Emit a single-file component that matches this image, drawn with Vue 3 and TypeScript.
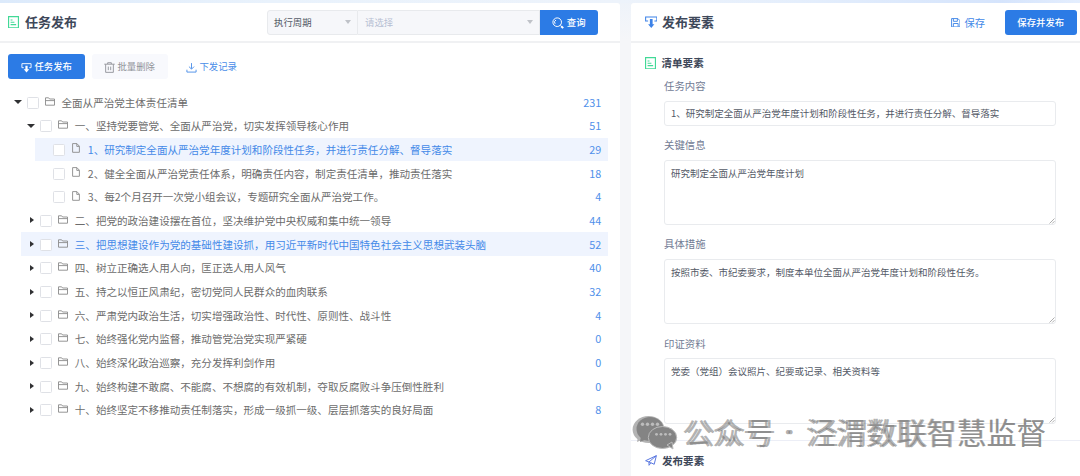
<script setup lang="ts">
interface TreeRow {
  label: string
  count: number
  level: 0 | 1 | 2
  open?: boolean
  active?: boolean
}

const rows: TreeRow[] = [
  { label: '全面从严治党主体责任清单', count: 231, level: 0, open: true },
  { label: '一、坚持党要管党、全面从严治党，切实发挥领导核心作用', count: 51, level: 1, open: true },
  { label: '1、研究制定全面从严治党年度计划和阶段性任务，并进行责任分解、督导落实', count: 29, level: 2, active: true },
  { label: '2、健全全面从严治党责任体系，明确责任内容，制定责任清单，推动责任落实', count: 18, level: 2 },
  { label: '3、每2个月召开一次党小组会议，专题研究全面从严治党工作。', count: 4, level: 2 },
  { label: '二、把党的政治建设摆在首位，坚决维护党中央权威和集中统一领导', count: 44, level: 1 },
  { label: '三、把思想建设作为党的基础性建设抓，用习近平新时代中国特色社会主义思想武装头脑', count: 52, level: 1, active: true },
  { label: '四、树立正确选人用人向，匡正选人用人风气', count: 40, level: 1 },
  { label: '五、持之以恒正风肃纪，密切党同人民群众的血肉联系', count: 32, level: 1 },
  { label: '六、严肃党内政治生活，切实增强政治性、时代性、原则性、战斗性', count: 4, level: 1 },
  { label: '七、始终强化党内监督，推动管党治党实现严紧硬', count: 0, level: 1 },
  { label: '八、始终深化政治巡察，充分发挥利剑作用', count: 0, level: 1 },
  { label: '九、始终构建不敢腐、不能腐、不想腐的有效机制，夺取反腐败斗争压倒性胜利', count: 0, level: 1 },
  { label: '十、始终坚定不移推动责任制落实，形成一级抓一级、层层抓落实的良好局面', count: 8, level: 1 },
]

const areas = [
  { label: '关键信息', value: '研究制定全面从严治党年度计划' },
  { label: '具体措施', value: '按照市委、市纪委要求，制度本单位全面从严治党年度计划和阶段性任务。' },
  { label: '印证资料', value: '党委（党组）会议照片、纪要或记录、相关资料等' },
]

// The mark is printed twice with slightly different tracking.
const marks = [
  { text: '公众号', x: 682, w: 91 },
  { text: '·', x: 788, w: 0 },
  { text: '泾渭数联智慧监督', x: 805.5, w: 241 },
  { text: '公众号', x: 685.5, w: 90.5 },
  { text: '·', x: 790.5, w: 0 },
  { text: '泾渭数联智慧监督', x: 808.5, w: 238 },
]
</script>

<template>
  <div class="page">
    <section class="panel left">
      <header class="head">
        <svg class="ic-list" viewBox="0 0 12 13"><path d="M.6.6h10.3v11.6H.6zM2.7 4.2h2M2.7 6.5h4M2.7 9h5.8" /></svg>
        <h1>任务发布</h1>
        <div class="search">
          <div class="select period"><span>执行周期</span><i class="caret"></i></div>
          <div class="select value"><span>请选择</span><i class="caret"></i></div>
          <button class="btn query">
            <svg viewBox="0 0 12 12"><circle cx="5.2" cy="5.2" r="4.3" /><path d="M3.1 6.8A2.6 2.6 0 0 1 4 3M8.4 8.4l1.2 1.1" /><path class="heavy" d="M9.2 9.2l2 1.9" /></svg>查询
          </button>
        </div>
      </header>
      <div class="tools">
        <button class="btn publish">
          <svg viewBox="0 0 12 12"><path d="M3 6.2H1V1.8h10v4.4H9" /><path class="solid" d="M4.8 4h2.4v4h1.8L6 11.5 3 8h1.8z" /></svg>任务发布
        </button>
        <button class="btn remove">
          <svg viewBox="0 0 12 12"><path d="M.3 2.4h11.4M4 2.2V.8h4v1.4M1.8 2.5v8.8h8.4V2.5M4.7 5v3.9M7.3 5v3.9" /></svg>批量删除
        </button>
        <button class="btn record">
          <svg viewBox="0 0 12 12"><path d="M6 1.2v6.2M3.2 5 6 7.8 8.8 5M1 8.4v2.6h10V8.4" /></svg>下发记录
        </button>
      </div>
      <ul class="tree">
        <li v-for="row in rows" :key="row.label" :class="['row', 'level' + row.level, { active: row.active }]">
          <i :class="['toggle', { open: row.open, leaf: row.level === 2 }]"></i>
          <i class="check"></i>
          <svg v-if="row.level < 2" class="folder" viewBox="0 0 10 9"><path d="M.5 8.2V.8h3.1l1 1.2h4.9v6.2zM.5 3.6h9" /></svg>
          <svg v-else class="file" viewBox="0 0 8 10"><path d="M.6.6h4.3l2.5 2.6v6.1H.6zM4.8.8v2.6h2.5" /></svg>
          <span class="label">{{ row.label }}</span>
          <span class="count">{{ row.count }}</span>
        </li>
      </ul>
    </section>

    <section class="panel right">
      <header class="head">
        <svg class="ic-send" viewBox="0 0 12 12"><path d="M3 4.8H.6V.9h10.8v3.9H9" /><path class="solid" d="M4.7 2.8h2.6v5h1.7L6 11.6 3 7.8h1.7z" /></svg>
        <h1>发布要素</h1>
        <div class="actions">
          <button class="btn save">
            <svg viewBox="0 0 10 10"><path d="M.6.6h6.7l2.1 2.2v6.6H.6zM2.5.8v2.7h4.2V.8M2.5 9.2V5.8h5v3.4" /></svg>保存
          </button>
          <button class="btn both">保存并发布</button>
        </div>
      </header>
      <div class="form">
        <h2>
          <svg class="ic-list" viewBox="0 0 12 13"><path d="M.6.6h10.3v11.6H.6zM2.7 4.2h2M2.7 6.5h4M2.7 9h5.8" /></svg>清单要素
        </h2>
        <div class="field first">
          <label>任务内容</label>
          <div class="box">1、研究制定全面从严治党年度计划和阶段性任务，并进行责任分解、督导落实</div>
        </div>
        <div v-for="a in areas" :key="a.label" class="field">
          <label>{{ a.label }}</label>
          <div class="box area">
            {{ a.value }}
            <svg class="grip" viewBox="0 0 6 6"><path d="M.5 5.5l5-5M3.2 5.5l2.3-2.3" /></svg>
          </div>
        </div>
      </div>
      <div class="next">
        <h2>
          <svg class="ic-plane" viewBox="0 0 12 11"><path d="M.6 5.7 11.4.6 9.2 9.3 5.6 7.6zM11.2.8 4 7v3.3l1.8-2.4" /></svg>发布要素
        </h2>
      </div>
    </section>

    <svg class="mark" viewBox="0 0 1080 476">
      <g class="bubbles light"><ellipse cx="648.6" cy="429.5" rx="16" ry="13.5" /><path d="M638 437l-1 5 7-3z" /></g>
      <g class="bubbles"><ellipse cx="650" cy="429" rx="13.5" ry="12" /><path d="M641 436l-1 6 7-3z" /></g>
      <g class="bubbles second"><ellipse cx="662.5" cy="437.5" rx="14.2" ry="11" /><path d="M667 445l6 4-1-7z" /></g>
      <g class="dots"><circle v-for="x in [642.5, 647.5, 652.5, 657.5]" :key="x" :cx="x" cy="424.2" r="1.7" /><circle v-for="x in [656.5, 661, 665.5, 670]" :key="x" :cx="x" cy="434.3" r="1.4" /></g>
      <template v-for="m in marks" :key="m.x">
        <text v-if="m.w" :x="m.x" y="443.5" :textLength="m.w">{{ m.text }}</text>
        <text v-else class="dot" :x="m.x" y="440">{{ m.text }}</text>
      </template>
    </svg>
  </div>
</template>

<style>
body { margin: 0; overflow: hidden; }
</style>

<style scoped>
* { box-sizing: border-box; }
.page {
  position: relative; width: 1080px; height: 476px; overflow: hidden; padding-top: 3px;
  display: flex; gap: 11px;
  background: linear-gradient(90deg, #dceafb 0, #e9f2fc 270px, #edf3fb 620px, #e4eefc 800px, #d5e4fc 1000px, #e4eefe 1080px) 0 0 / 100% 3px no-repeat,
    linear-gradient(180deg, #eef3fa, #f5f6f9 40px);
  font-family: "Noto Sans CJK SC", sans-serif; font-size: 10.55px; color: #6c6c6c;
}
svg { fill: none; stroke: currentColor; stroke-width: 1; flex: none; }
.solid { fill: currentColor; stroke: none; }
.panel { height: 473px; background: #fff; }
.left { width: 620px; border-radius: 0 3px 0 0; }
.right { width: 449px; border-radius: 3px 0 0 0; }
.head { height: 40px; border-bottom: 2px solid #f0f1f3; display: flex; align-items: center; }
.left .head { padding: 0 22px 0 8px; }
.right .head { padding: 0 3px 0 13.5px; }
h1 { margin: 0; font-size: 13px; line-height: 18px; font-weight: 700; color: #3e485a; margin-top: -1px; }
.ic-list { width: 11.5px; height: 12.5px; color: #42d997; margin-right: 5.5px; stroke-width: 1.2; }
.ic-send { width: 12.5px; height: 12.5px; color: #3c82e8; margin-right: 5px; margin-top: 1px; }
.search { margin-left: auto; display: flex; }
.select {
  height: 25px; border: 1px solid #e8eaed; background: #f6f7fa; display: flex; align-items: center;
  justify-content: space-between; font-size: 9.4px; color: #555b68;
}
.period { width: 91px; border-radius: 3px 0 0 3px; padding: 0 6px; }
.value { width: 182px; border-left: 0; padding: 0 6px 0 7px; color: #b6bfd3; }
.caret { border: 3.2px solid transparent; border-top: 4px solid #bfc2c8; border-bottom: 0; }
.btn {
  height: 25px; border: 0; padding: 0; border-radius: 3px; font: 500 9.4px/25px "Noto Sans CJK SC", sans-serif;
  display: flex; align-items: center; justify-content: center; gap: 2.5px; background: none; white-space: nowrap;
}
.query, .publish, .both { background: #2c7be5; color: #fff; }
.query { width: 58px; border-radius: 0 3px 3px 0; }
.query svg { width: 12px; height: 12px; margin-top: 1px; }
.heavy { stroke-width: 2; }
.tools { display: flex; padding: 11px 8px 0; }
.tools svg { width: 11px; height: 11px; margin-top: 1px; }
.publish { width: 77px; }
.remove { width: 76px; margin-left: 6.5px; background: #f8f9fd; color: #909399; font-weight: 400; }
.record { width: 76px; margin-left: 6px; color: #4a8de8; font-weight: 400; }
.tree { list-style: none; margin: 11.3px 12.3px 0 8px; padding: 0; }
.row { height: 23.68px; display: flex; align-items: center; padding-right: 6.5px; white-space: nowrap; }
.level1 { margin-left: 13.3px; }
.level2 { margin-left: 26.6px; }
.active { background: #eff4fe; color: #4389e8; }
.toggle { width: 18.5px; height: 10px; display: flex; align-items: center; justify-content: center; padding-left: 1px; }
.toggle::before { content: ""; border: 3.8px solid transparent; border-left: 4.8px solid #303133; border-right: 0; margin-left: 1px; }
.toggle.open::before { border: 4px solid transparent; border-top: 4.8px solid #303133; border-bottom: 0; margin-left: 0; }
.toggle.leaf::before { display: none; }
.check { width: 12px; height: 12px; border: 1px solid #dfe1e6; border-radius: 1.5px; background: #fff; margin-top: 1px; }
.folder { width: 10px; height: 9px; color: #8a8a8a; margin: -2px 6.7px 0 6.3px; stroke-width: .9; }
.file { width: 8px; height: 10px; color: #8a8a8a; margin: -2px 7.7px 0 7px; stroke-width: .9; }
.label { flex: 1; }
.count { color: #4f90ea; font-size: 10.8px; margin-top: -1px; }
.actions { margin-left: auto; display: flex; gap: 19.5px; }
.save { color: #4389e8; font-weight: 400; font-size: 10.3px; gap: 4px; }
.save svg { width: 9.5px; height: 9.5px; margin-top: 1px; }
.both { width: 72.5px; }
h2 { margin: 0; height: 16px; font-size: 10.55px; line-height: 16px; font-weight: 700; color: #3e485a; display: flex; align-items: center; }
.form { padding: 12px 24.5px 0 13.5px; height: 396.5px; }
.field { padding-left: 19.5px; height: 99.3px; }
label { display: block; height: 22.5px; line-height: 16px; font-size: 10.4px; color: #717b94; }
.first { height: 66.2px; }
.first label { height: 30px; padding-top: 7px; }
.box { height: 25px; border: 1px solid #e9ebee; border-radius: 3px; padding: 0 6px; line-height: 23px; font-size: 9.5px; color: #535966; white-space: nowrap; }
.area { position: relative; height: 65.5px; line-height: 24px; }
.grip { position: absolute; right: 0; bottom: 0; width: 6px; height: 6px; color: #777; stroke-width: .6; }
.next { border-top: 1px solid #eceef6; padding: 12px 13.5px; }
.ic-plane { width: 12px; height: 11px; color: #5b78e0; margin-right: 5.5px; }
.mark { position: absolute; left: 0; top: 0; width: 1080px; height: 476px; stroke: none; pointer-events: none; }
.mark text { font-size: 30px; fill: #707070; fill-opacity: .55; }
.mark .dot { font-size: 20px; text-anchor: middle; }
.bubbles { fill: #848484; }
.bubbles.light { fill: #b3b3b3; }
.bubbles.second { stroke: #bbb; stroke-width: 1; }
.dots { fill: #bdbdbd; }
</style>
